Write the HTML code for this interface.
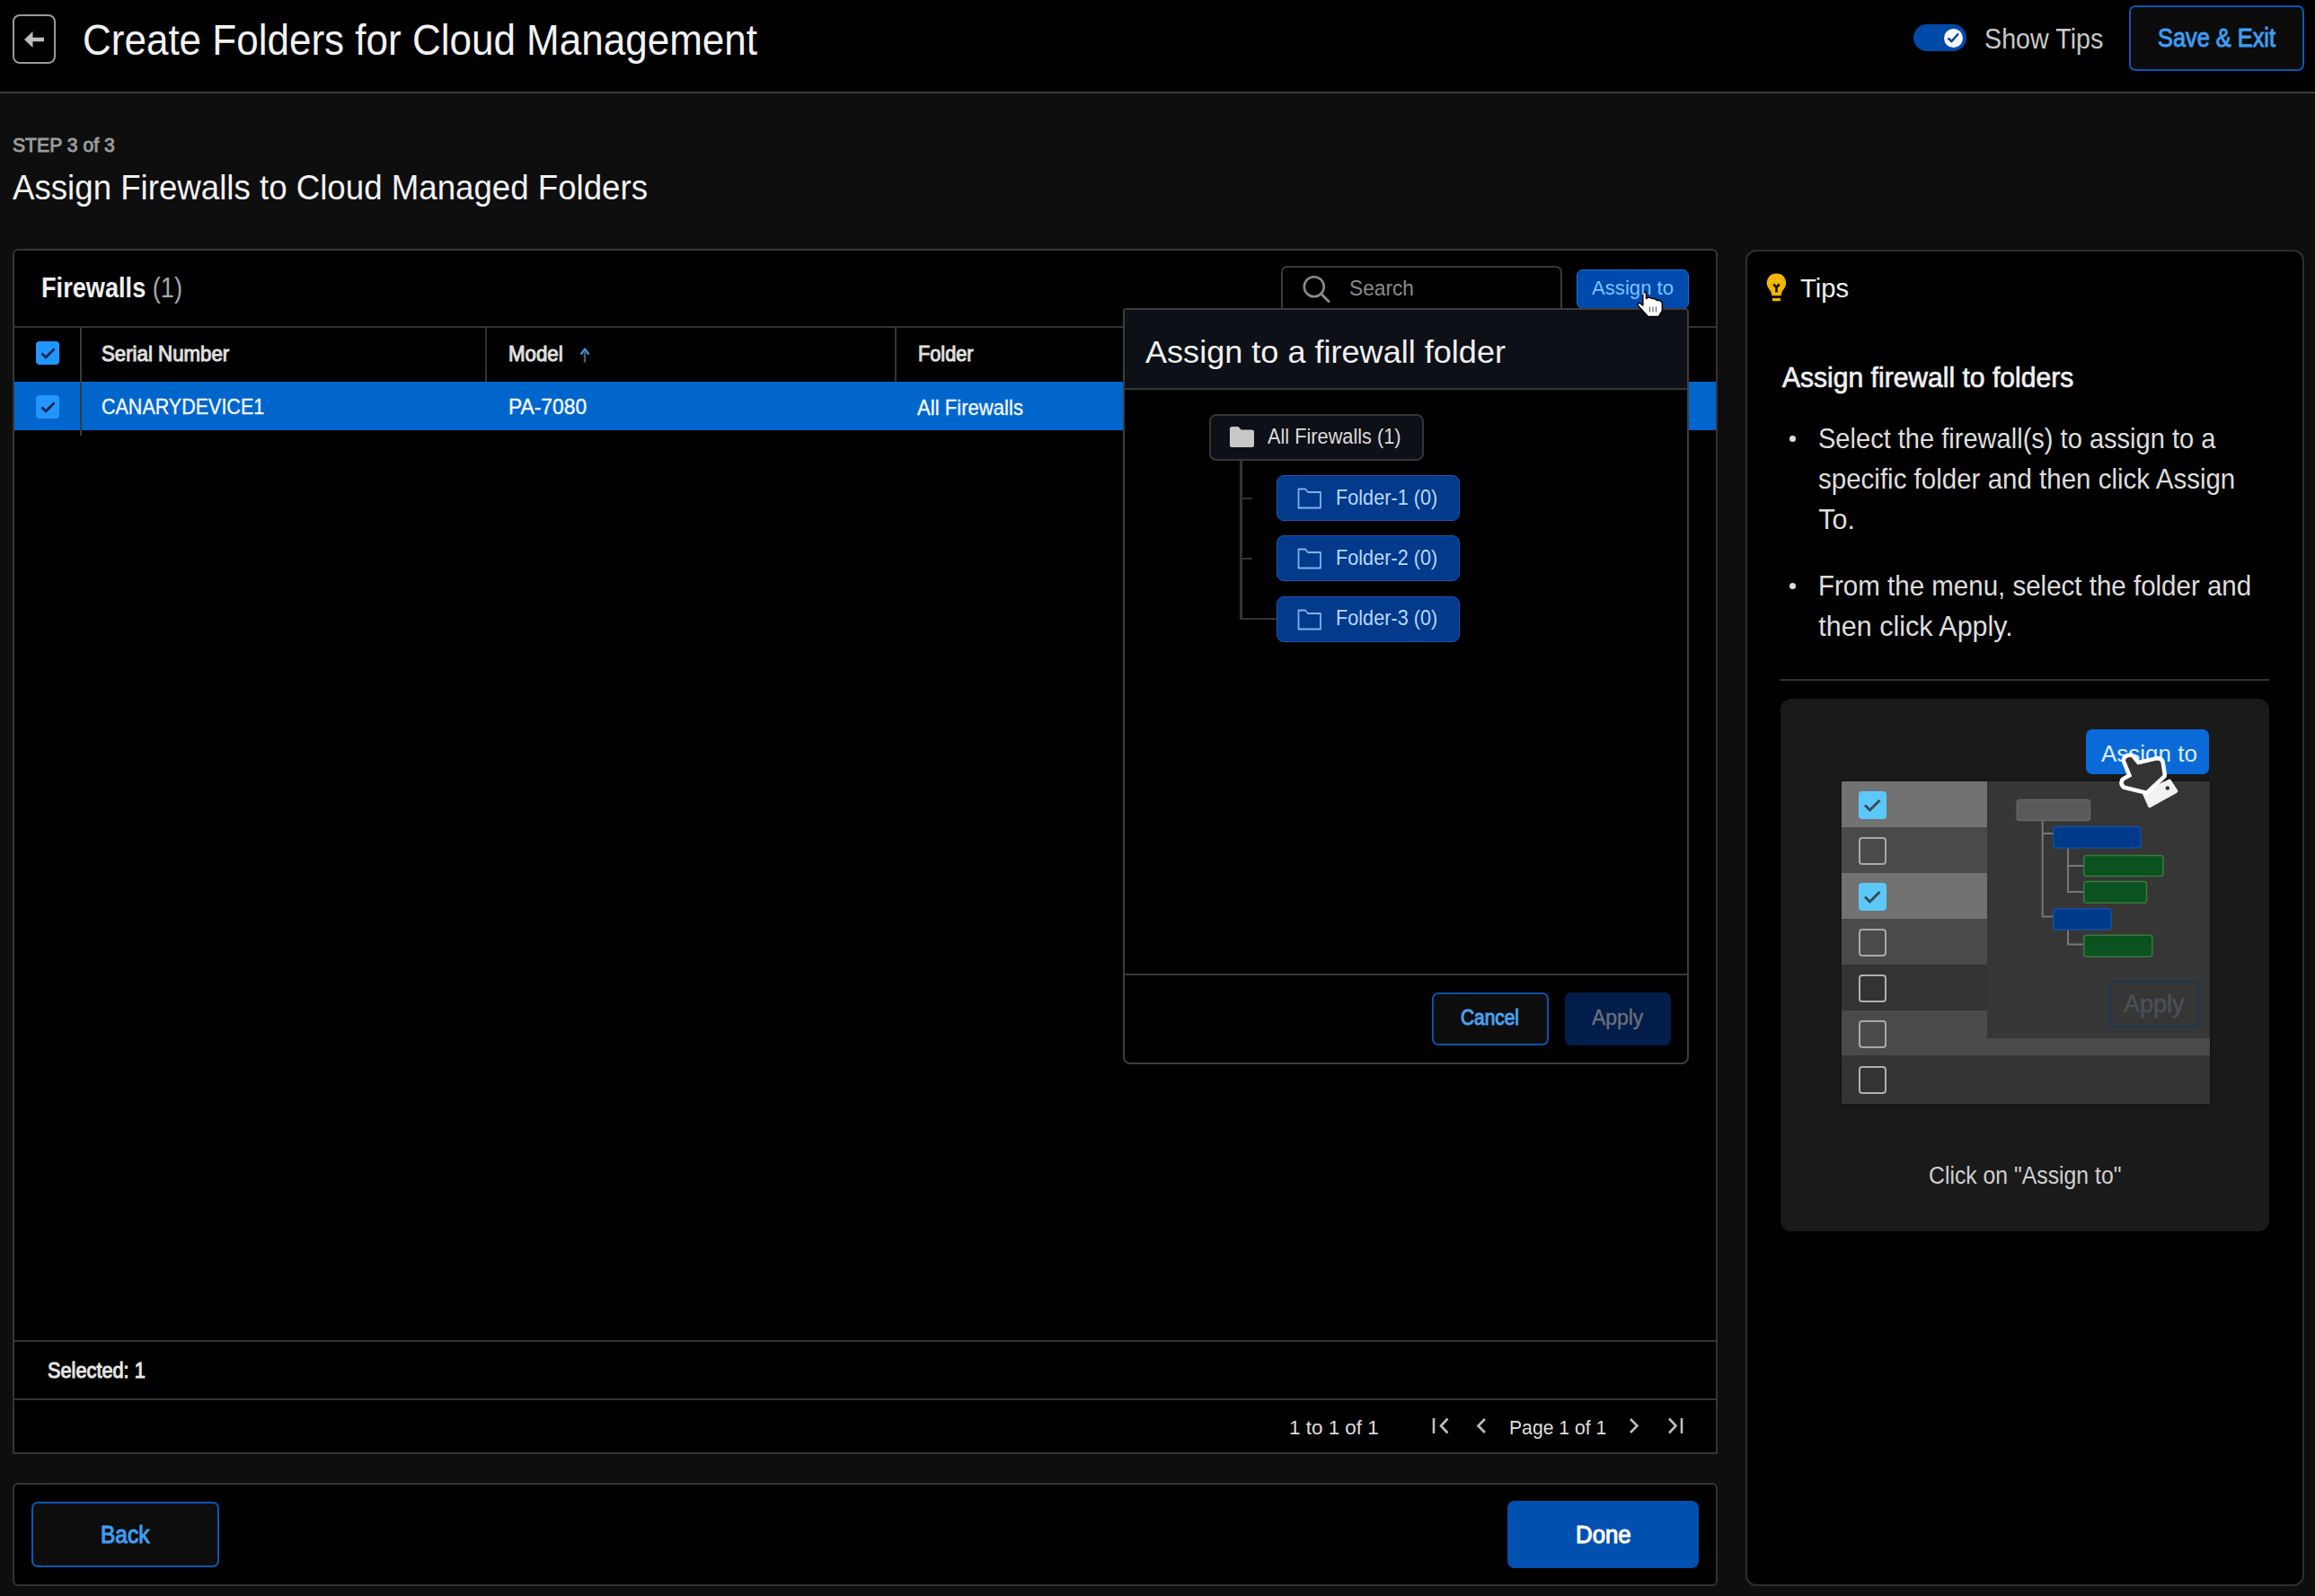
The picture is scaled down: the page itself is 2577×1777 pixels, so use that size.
<!DOCTYPE html>
<html><head><meta charset="utf-8">
<style>
html,body{margin:0;padding:0;}
body{width:2577px;height:1777px;overflow:hidden;background:#0e0e0e;position:relative;font-family:"Liberation Sans",sans-serif;}
.a{position:absolute;box-sizing:border-box;}
.t{position:absolute;white-space:nowrap;line-height:1;transform-origin:0 0;}
</style></head><body>
<!-- header -->
<div class="a" style="left:0;top:0;width:2577px;height:102px;background:#000;"></div>
<div class="a" style="left:0;top:102px;width:2577px;height:2px;background:#3c3c3c;"></div>
<div class="a" style="left:13.5px;top:16px;width:48.5px;height:55px;border:2px solid #9a9a9a;border-radius:8px;"></div>
<svg class="a" style="left:0;top:0" width="100" height="100"><path d="M27 44 L36.5 35 L36.5 41.8 L49 41.8 L49 46.2 L36.5 46.2 L36.5 53 Z" fill="#bdbdbd"/></svg>
<!-- toggle -->
<div class="a" style="left:2130px;top:27px;width:59px;height:30px;border-radius:15px;background:#004aa8;"></div>
<div class="a" style="left:2164px;top:32px;width:21px;height:21px;border-radius:50%;background:#f4faff;"></div>
<svg class="a" style="left:2160px;top:28px" width="30" height="30"><path d="M8.5 14.5 L12.5 18 L20 9.5" stroke="#0b3f8a" stroke-width="2.4" fill="none"/></svg>
<!-- save & exit -->
<div class="a" style="left:2370px;top:6px;width:195px;height:73px;border:2px solid #0a57b5;border-radius:7px;background:#0b0b0b;"></div>

<!-- left panel -->
<div class="a" style="left:14px;top:277px;width:1898px;height:1342px;border:2px solid #353535;border-radius:6px 6px 0 0;background:#000;"></div>
<div class="a" style="left:16px;top:363px;width:1894px;height:2px;background:#333;"></div>
<div class="a" style="left:16px;top:425px;width:1894px;height:54px;background:#0066cc;"></div>
<div class="a" style="left:88.5px;top:365px;width:2px;height:120px;background:#3a3a3a;"></div>
<div class="a" style="left:540px;top:365px;width:2px;height:60px;background:#333;"></div>
<div class="a" style="left:996px;top:365px;width:2px;height:60px;background:#333;"></div>
<div class="a" style="left:16px;top:1492px;width:1894px;height:2px;background:#333;"></div>
<div class="a" style="left:16px;top:1557px;width:1894px;height:2px;background:#333;"></div>
<!-- checkboxes -->
<div class="a" style="left:40px;top:380px;width:26px;height:26px;border-radius:4px;background:#2196ff;"></div>
<svg class="a" style="left:40px;top:380px" width="26" height="26"><path d="M6.5 13.5 L11 18 L20.5 8.5" stroke="#0a1f44" stroke-width="2.6" fill="none"/></svg>
<div class="a" style="left:40px;top:440px;width:26px;height:26px;border-radius:4px;background:#2196ff;"></div>
<svg class="a" style="left:40px;top:440px" width="26" height="26"><path d="M6.5 13.5 L11 18 L20.5 8.5" stroke="#0a1f44" stroke-width="2.6" fill="none"/></svg>
<!-- sort arrow -->
<svg class="a" style="left:640px;top:384px" width="22" height="24"><path d="M11 19.5 L11 8" stroke="#4a5a6a" stroke-width="2.4"/><path d="M6.5 10.5 L11 5 L15.5 10.5" stroke="#3d8fe0" stroke-width="2.4" fill="none"/></svg>
<!-- search -->
<div class="a" style="left:1426px;top:296px;width:313px;height:70px;border:2px solid #3a3a3a;border-radius:7px;background:#000;"></div>
<svg class="a" style="left:1440px;top:300px" width="50" height="45"><circle cx="22.8" cy="19.2" r="11" stroke="#8a8a8a" stroke-width="2.6" fill="none"/><path d="M30.5 27 L39 35.5" stroke="#8a8a8a" stroke-width="3" stroke-linecap="round"/></svg>
<!-- assign to button -->
<div class="a" style="left:1755px;top:299.5px;width:125px;height:44.5px;border:1.5px solid #1f6fd6;border-radius:7px;background:#004aad;"></div>

<!-- dropdown -->
<div class="a" style="left:1250px;top:343px;width:630px;height:842px;border:2px solid #3d3d3d;border-radius:4px 4px 8px 8px;background:#000;"></div>
<div class="a" style="left:1252px;top:345px;width:626px;height:87px;background:#0d1016;"></div>
<div class="a" style="left:1252px;top:432px;width:626px;height:2px;background:#353535;"></div>
<div class="a" style="left:1252px;top:1084px;width:626px;height:2px;background:#3a3a3a;"></div>
<!-- tree -->
<div class="a" style="left:1346px;top:461px;width:239px;height:52px;border:2px solid #353535;border-radius:8px;background:#0d1016;"></div>
<svg class="a" style="left:1366px;top:472px" width="34" height="30"><path d="M3 5.5 Q3 3 5.5 3 L12.5 3 L15.5 6.5 L27.5 6.5 Q30 6.5 30 9 L30 23.5 Q30 26 27.5 26 L5.5 26 Q3 26 3 23.5 Z" fill="#c8c8c8"/></svg>
<div class="a" style="left:1380px;top:513px;width:2.5px;height:177px;background:#333;"></div>
<div class="a" style="left:1380px;top:553.5px;width:14px;height:2.5px;background:#333;"></div>
<div class="a" style="left:1380px;top:620.5px;width:14px;height:2.5px;background:#333;"></div>
<div class="a" style="left:1380px;top:687.5px;width:41px;height:2.5px;background:#333;"></div>
<div class="a" style="left:1421px;top:529px;width:204px;height:51px;border:1.5px solid #1d55ab;border-radius:8px;background:#033a8c;"></div>
<div class="a" style="left:1421px;top:596.3px;width:204px;height:51px;border:1.5px solid #1d55ab;border-radius:8px;background:#033a8c;"></div>
<div class="a" style="left:1421px;top:663.6px;width:204px;height:51px;border:1.5px solid #1d55ab;border-radius:8px;background:#033a8c;"></div>
<svg class="a" style="left:1440px;top:540px" width="36" height="30"><path d="M5.5 4.5 L13 4.5 L16 8 L30 8 L30 25.5 L5.5 25.5 Z" stroke="#7fb2f0" stroke-width="1.8" fill="none" stroke-linejoin="round"/></svg>
<svg class="a" style="left:1440px;top:607.3px" width="36" height="30"><path d="M5.5 4.5 L13 4.5 L16 8 L30 8 L30 25.5 L5.5 25.5 Z" stroke="#7fb2f0" stroke-width="1.8" fill="none" stroke-linejoin="round"/></svg>
<svg class="a" style="left:1440px;top:674.6px" width="36" height="30"><path d="M5.5 4.5 L13 4.5 L16 8 L30 8 L30 25.5 L5.5 25.5 Z" stroke="#7fb2f0" stroke-width="1.8" fill="none" stroke-linejoin="round"/></svg>
<!-- dropdown buttons -->
<div class="a" style="left:1594px;top:1105px;width:130px;height:59px;border:2px solid #0b51a8;border-radius:7px;background:#0d0d0d;"></div>
<div class="a" style="left:1742px;top:1105px;width:118px;height:59px;border-radius:7px;background:#021d4a;"></div>

<!-- cursor -->
<svg class="a" style="left:1815px;top:318px" width="45" height="45"><path d="M13.8 8.5 Q15.6 6 17.5 8.5 L17.5 14.5 Q18.5 13 20.5 13.2 Q23 13.3 24 14.5 Q25.5 14 27 14.8 Q28.5 15.3 29.5 16.5 Q31 16 33 16.8 Q35.2 17.8 35.4 20 L35.4 28 L31.5 34.5 L19.5 34.5 L8.6 22.5 Q7.2 20 9.8 19.2 L13.8 22 Z" fill="#ffffff" stroke="#000" stroke-width="1.5" stroke-linejoin="round"/><path d="M21.5 23.5 L21.5 29.5 M25 23.5 L25 29.5 M28.5 23.5 L28.5 29.5" stroke="#666" stroke-width="1.2"/></svg>
<!-- pagination icons -->
<svg class="a" style="left:1590px;top:1572px" width="300" height="34"><path d="M6 7 L6 24" stroke="#bdbdbd" stroke-width="2.6"/><path d="M21.5 7.5 L14 15.5 L21.5 23.5" stroke="#bdbdbd" stroke-width="2.6" fill="none"/><path d="M63 8 L55.5 15.5 L63 23" stroke="#bdbdbd" stroke-width="2.6" fill="none"/><path d="M225 8 L232.5 15.5 L225 23" stroke="#bdbdbd" stroke-width="2.6" fill="none"/><path d="M268 7.5 L275.5 15.5 L268 23.5" stroke="#bdbdbd" stroke-width="2.6" fill="none"/><path d="M282 7 L282 24" stroke="#bdbdbd" stroke-width="2.6"/></svg>

<!-- footer -->
<div class="a" style="left:14px;top:1651px;width:1898px;height:115px;border:2px solid #333;border-radius:6px;background:#000;"></div>
<div class="a" style="left:35px;top:1672px;width:209px;height:73px;border:2px solid #0a57b5;border-radius:7px;background:#0d0d0d;"></div>
<div class="a" style="left:1678px;top:1671px;width:213px;height:74.5px;border-radius:8px;background:#0050b0;"></div>

<!-- tips panel -->
<div class="a" style="left:1943px;top:277.5px;width:622px;height:1488px;border:2px solid #2e2e2e;border-radius:12px;background:#000;"></div>
<svg class="a" style="left:1960px;top:300px" width="36" height="40"><path d="M17.5 4.5 C11 4.5 6.8 9.2 6.8 15 C6.8 19.5 9.7 22.3 11.3 24.5 L12.5 29.2 L22.5 29.2 L23.7 24.5 C25.3 22.3 28.2 19.5 28.2 15 C28.2 9.2 24 4.5 17.5 4.5 Z" fill="#f2b705"/><path d="M14.2 16.5 L17.5 19.8 L20.8 16.5 M17.5 19.8 L17.5 25.5" stroke="#1a1200" stroke-width="2.6" fill="none"/><rect x="13" y="32" width="9" height="3.2" fill="#f2b705"/></svg>
<!-- bullets -->
<div class="a" style="left:1991.5px;top:485px;width:7px;height:7px;border-radius:50%;background:#dedede;"></div>
<div class="a" style="left:1991.5px;top:649px;width:7px;height:7px;border-radius:50%;background:#dedede;"></div>
<div class="a" style="left:1981px;top:756px;width:545px;height:2px;background:#333;"></div>

<!-- illustration card -->
<div class="a" style="left:1982px;top:778px;width:544px;height:593px;border-radius:12px;background:#1a1a1a;"></div>
<div class="a" style="left:2049.5px;top:870px;width:410px;height:359px;border-radius:2px;background:#333;overflow:hidden;box-shadow:0 0 4px rgba(0,0,0,0.5);">
  <div class="a" style="left:0;top:0;width:162px;height:51px;background:#727272;"></div>
  <div class="a" style="left:0;top:51px;width:162px;height:51px;background:#4a4a4a;"></div>
  <div class="a" style="left:0;top:102px;width:162px;height:51px;background:#727272;"></div>
  <div class="a" style="left:0;top:153px;width:162px;height:51px;background:#4a4a4a;"></div>
  <div class="a" style="left:0;top:204px;width:162px;height:51px;background:#333;"></div>
  <div class="a" style="left:0;top:255px;width:410px;height:50px;background:#4a4a4a;"></div>
  <div class="a" style="left:0;top:305px;width:410px;height:54px;background:#343434;"></div>
  <div class="a" style="left:162px;top:0;width:248px;height:286px;background:#363636;"></div>
</div>
<!-- mock checkboxes -->
<div class="a" style="left:2069px;top:881px;width:30.5px;height:30.5px;border-radius:4px;background:#5cc8fa;"></div>
<svg class="a" style="left:2069px;top:881px" width="31" height="31"><path d="M7 15.5 L12.5 21 L23.5 10" stroke="#3a4a55" stroke-width="3" fill="none"/></svg>
<div class="a" style="left:2069px;top:932px;width:30.5px;height:30.5px;border:2.5px solid #a8a8a8;border-radius:4px;"></div>
<div class="a" style="left:2069px;top:983px;width:30.5px;height:30.5px;border-radius:4px;background:#5cc8fa;"></div>
<svg class="a" style="left:2069px;top:983px" width="31" height="31"><path d="M7 15.5 L12.5 21 L23.5 10" stroke="#3a4a55" stroke-width="3" fill="none"/></svg>
<div class="a" style="left:2069px;top:1034px;width:30.5px;height:30.5px;border:2.5px solid #a8a8a8;border-radius:4px;"></div>
<div class="a" style="left:2069px;top:1085px;width:30.5px;height:30.5px;border:2.5px solid #b0b0b0;border-radius:4px;"></div>
<div class="a" style="left:2069px;top:1136px;width:30.5px;height:30.5px;border:2.5px solid #a8a8a8;border-radius:4px;"></div>
<div class="a" style="left:2069px;top:1187px;width:30.5px;height:30.5px;border:2.5px solid #b0b0b0;border-radius:4px;"></div>
<!-- mock tree -->
<svg class="a" style="left:2240px;top:885px" width="180" height="190">
  <path d="M33.7 28 L33.7 135.5 L46 135.5 M33.7 43 L46 43 M62 59 L62 108 L80 108 M62 79 L80 79 M62 150 L62 166.4 L80 166.4" stroke="#777" stroke-width="2" fill="none"/>
  <rect x="5.3" y="5.4" width="81.3" height="23.2" rx="3" fill="#5a5a5a" stroke="#666" stroke-width="1.5"/>
  <rect x="46" y="35.5" width="97" height="23.4" rx="3" fill="#003a8a" stroke="#164e9e" stroke-width="1.5"/>
  <rect x="79.8" y="67.4" width="88.2" height="23.2" rx="3" fill="#0a521f" stroke="#3a7a3a" stroke-width="1.5"/>
  <rect x="79.8" y="96.4" width="69.7" height="23.9" rx="3" fill="#0a521f" stroke="#3a7a3a" stroke-width="1.5"/>
  <rect x="46" y="126.7" width="64" height="23.4" rx="3" fill="#003a8a" stroke="#164e9e" stroke-width="1.5"/>
  <rect x="79.8" y="156.2" width="76" height="24" rx="3" fill="#0a521f" stroke="#3a7a3a" stroke-width="1.5"/>
</svg>
<div class="a" style="left:2348px;top:1091.5px;width:99.5px;height:52.5px;border:2px solid #1c3550;border-radius:4px;"></div>
<div class="a" style="left:2321.7px;top:812.4px;width:137.8px;height:49.6px;border-radius:7px;background:#0a6ad8;"></div>
<div class="t" style="left:2339px;top:826px;font-size:26px;color:#dcecff;line-height:1;">Assign to</div>
<div class="t" style="left:2364px;top:1105px;font-size:27px;font-weight:400;-webkit-text-stroke:0.6px #4b5058;color:#4b5058;line-height:1;">Apply</div>
<!-- mock hand -->
<svg class="a" style="left:2350px;top:832px" width="80" height="72"><path d="M36.8 51.2 L65 37.6 L72.3 48.9 L43 65.3 Z" fill="#f2f2f2" stroke="#f2f2f2" stroke-width="4" stroke-linejoin="round"/><path id="hp" d="M16.5 14.5 Q17.5 10.5 22.7 11.7 L29.5 20.1 L50.9 15.1 Q54.5 14.8 54.9 16.8 L57.1 30.9 L39.1 47.8 L15.4 42.1 Q13.5 40 14.8 37.6 L23.8 32.6 Z" fill="#fff" stroke="#fff" stroke-width="10" stroke-linejoin="round"/><path d="M16.5 14.5 Q17.5 10.5 22.7 11.7 L29.5 20.1 L50.9 15.1 Q54.5 14.8 54.9 16.8 L57.1 30.9 L39.1 47.8 L15.4 42.1 Q13.5 40 14.8 37.6 L23.8 32.6 Z" fill="#333" stroke="#333" stroke-width="1" stroke-linejoin="round"/><circle cx="62.8" cy="45.5" r="2.3" fill="#333"/></svg>
<div id="t0" class="t" style="left:92.0px;top:19.6px;font-size:48.11px;color:#f2f2f2;font-weight:400;transform:scaleX(0.9148);">Create Folders for Cloud Management</div>
<div id="t1" class="t" style="left:2208.7px;top:27.7px;font-size:30.52px;color:#c8c8c8;font-weight:400;transform:scaleX(0.9398);">Show Tips</div>
<div id="t2" class="t" style="left:2402.0px;top:27.8px;font-size:29.07px;color:#3d9cf2;font-weight:400;-webkit-text-stroke:1.0px #3d9cf2;transform:scaleX(0.8720);">Save &amp; Exit</div>
<div id="t3" class="t" style="left:13.8px;top:151.2px;font-size:21.80px;color:#9c9c9c;font-weight:400;-webkit-text-stroke:0.9px #9c9c9c;transform:scaleX(0.9706);">STEP 3 of 3</div>
<div id="t4" class="t" style="left:13.8px;top:189.5px;font-size:38.37px;color:#f2f2f2;font-weight:400;transform:scaleX(0.9556);">Assign Firewalls to Cloud Managed Folders</div>
<div id="t5" class="t" style="left:46.0px;top:305.0px;font-size:31.54px;color:#f0f0f0;font-weight:700;transform:scaleX(0.8614);">Firewalls <span style="color:#a8a8a8;font-weight:400">(1)</span></div>
<div id="t6" class="t" style="left:112.8px;top:382.6px;font-size:23.69px;color:#e0e0e0;font-weight:400;-webkit-text-stroke:1.0px #e0e0e0;transform:scaleX(0.9393);">Serial Number</div>
<div id="t7" class="t" style="left:566.3px;top:382.5px;font-size:23.69px;color:#e0e0e0;font-weight:400;-webkit-text-stroke:1.0px #e0e0e0;transform:scaleX(0.9406);">Model</div>
<div id="t8" class="t" style="left:1022.0px;top:382.5px;font-size:23.69px;color:#e0e0e0;font-weight:400;-webkit-text-stroke:1.0px #e0e0e0;transform:scaleX(0.9173);">Folder</div>
<div id="t9" class="t" style="left:112.8px;top:442.3px;font-size:23.26px;color:#f4faff;font-weight:400;-webkit-text-stroke:0.35px #f4faff;transform:scaleX(0.9246);">CANARYDEVICE1</div>
<div id="t10" class="t" style="left:565.5px;top:442.3px;font-size:23.26px;color:#f4faff;font-weight:400;-webkit-text-stroke:0.35px #f4faff;transform:scaleX(0.9812);">PA-7080</div>
<div id="t11" class="t" style="left:1021.4px;top:442.5px;font-size:23.26px;color:#f4faff;font-weight:400;-webkit-text-stroke:0.35px #f4faff;transform:scaleX(0.9515);">All Firewalls</div>
<div id="t12" class="t" style="left:1501.5px;top:309.6px;font-size:23.26px;color:#8a8a8a;font-weight:400;transform:scaleX(0.9773);">Search</div>
<div id="t13" class="t" style="left:1771.7px;top:309.9px;font-size:22.53px;color:#7cc0ff;font-weight:400;transform:scaleX(0.9835);">Assign to</div>
<div id="t14" class="t" style="left:1274.7px;top:375.3px;font-size:35.90px;color:#f0f0f0;font-weight:400;transform:scaleX(1.0051);">Assign to a firewall folder</div>
<div id="t15" class="t" style="left:1411.4px;top:475.3px;font-size:23.26px;color:#dcdcdc;font-weight:400;transform:scaleX(0.9352);">All Firewalls (1)</div>
<div id="t16" class="t" style="left:1486.8px;top:541.6px;font-size:24.71px;color:#b9d9ff;font-weight:400;transform:scaleX(0.8772);">Folder-1 (0)</div>
<div id="t17" class="t" style="left:1486.8px;top:608.9px;font-size:24.71px;color:#b9d9ff;font-weight:400;transform:scaleX(0.8772);">Folder-2 (0)</div>
<div id="t18" class="t" style="left:1486.8px;top:676.2px;font-size:24.71px;color:#b9d9ff;font-weight:400;transform:scaleX(0.8772);">Folder-3 (0)</div>
<div id="t19" class="t" style="left:1626.0px;top:1122.1px;font-size:23.55px;color:#4aa3f5;font-weight:400;-webkit-text-stroke:1.0px #4aa3f5;transform:scaleX(0.8868);">Cancel</div>
<div id="t20" class="t" style="left:1771.7px;top:1122.1px;font-size:23.55px;color:#6b7079;font-weight:400;-webkit-text-stroke:0.4px #6b7079;transform:scaleX(0.9727);">Apply</div>
<div id="t21" class="t" style="left:53.0px;top:1513.7px;font-size:23.98px;color:#e6e6e6;font-weight:400;-webkit-text-stroke:1.0px #e6e6e6;transform:scaleX(0.9071);">Selected: 1</div>
<div id="t22" class="t" style="left:1435.0px;top:1578.1px;font-size:22.82px;color:#dedede;font-weight:400;transform:scaleX(0.9836);">1 to 1 of 1</div>
<div id="t23" class="t" style="left:1680.0px;top:1578.1px;font-size:22.82px;color:#dedede;font-weight:400;transform:scaleX(0.9280);">Page 1 of 1</div>
<div id="t24" class="t" style="left:111.9px;top:1694.4px;font-size:28.49px;color:#3f9ef2;font-weight:400;-webkit-text-stroke:1.1px #3f9ef2;transform:scaleX(0.8590);">Back</div>
<div id="t25" class="t" style="left:1753.7px;top:1694.5px;font-size:28.05px;color:#ffffff;font-weight:400;-webkit-text-stroke:1.1px #ffffff;transform:scaleX(0.9200);">Done</div>
<div id="t26" class="t" style="left:2004.0px;top:305.8px;font-size:30.09px;color:#f0f0f0;font-weight:400;transform:scaleX(0.9727);">Tips</div>
<div id="t27" class="t" style="left:1983.6px;top:403.6px;font-size:31.98px;color:#f0f0f0;font-weight:400;-webkit-text-stroke:0.7px #f0f0f0;transform:scaleX(0.9405);">Assign firewall to folders</div>
<div id="t28" class="t" style="left:2024.3px;top:472.9px;font-size:30.52px;color:#dedede;font-weight:400;transform:scaleX(0.9519);">Select the firewall(s) to assign to a</div>
<div id="t29" class="t" style="left:2024.3px;top:517.7px;font-size:30.52px;color:#dedede;font-weight:400;transform:scaleX(0.9672);">specific folder and then click Assign</div>
<div id="t30" class="t" style="left:2024.3px;top:562.5px;font-size:30.52px;color:#dedede;font-weight:400;">To.</div>
<div id="t31" class="t" style="left:2024.3px;top:636.8px;font-size:30.52px;color:#dedede;font-weight:400;transform:scaleX(0.9669);">From the menu, select the folder and</div>
<div id="t32" class="t" style="left:2024.3px;top:681.6px;font-size:30.52px;color:#dedede;font-weight:400;">then click Apply.</div>
<div id="t33" class="t" style="left:2146.5px;top:1294.9px;font-size:27.62px;color:#cfcfcf;font-weight:400;transform:scaleX(0.8973);">Click on "Assign to"</div>
</body></html>
